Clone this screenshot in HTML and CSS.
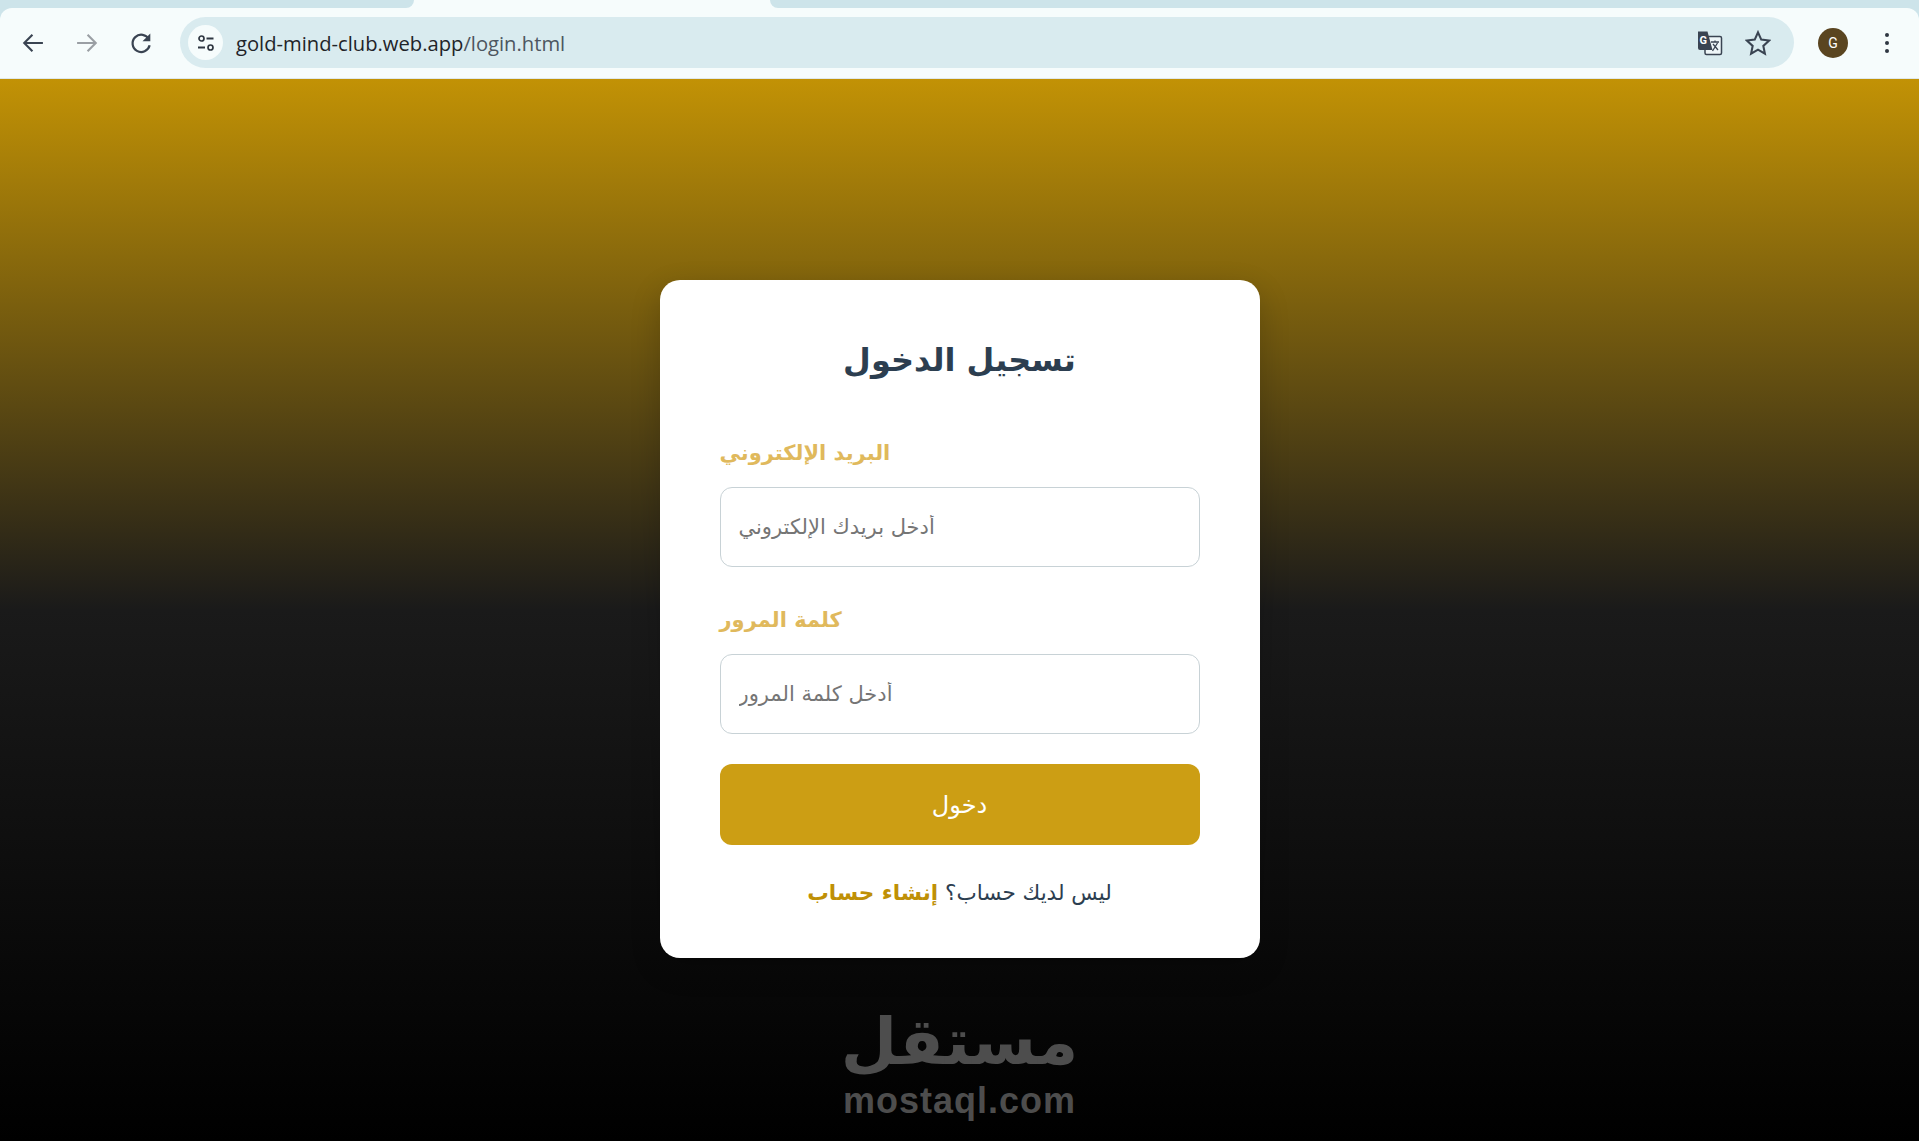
FILE: index.html
```html
<!DOCTYPE html>
<html lang="ar">
<head>
  <meta charset="UTF-8">
  <title>تسجيل الدخول</title>
  <link rel="stylesheet" href="styles.css">
</head>
<body>
  <header class="browser">
    <div class="tabstrip">
      <div class="tab-prev"></div>
      <div class="tab-active"></div>
      <div class="tab-next"></div>
    </div>
    <div class="toolbar">
      <svg class="nav-icon" viewBox="0 0 24 24"><path d="M20.500 12H4.500M11.500 5 4.500 12l7 7" fill="none" stroke="#3a4452" stroke-width="1.800"/></svg>
      <svg class="nav-icon" viewBox="0 0 24 24"><path d="M3.500 12h16M12.500 5l7 7-7 7" fill="none" stroke="#9a9fa4" stroke-width="1.800"/></svg>
      <svg class="nav-icon" viewBox="0 0 24 24"><path d="M18.800 9A7.400 7.400 0 1 0 19.400 14" fill="none" stroke="#3a4452" stroke-width="1.900"/><path d="M20 3.800v6.700h-6.700z" fill="#3a4452"/></svg>
      <div class="omnibox">
        <span class="site-info">
          <svg viewBox="0 0 20 20" width="20" height="20"><circle cx="5.500" cy="5.500" r="2.500" fill="none" stroke="#2f3742" stroke-width="1.700"/><path d="M10.500 5.500h7M2 14.500h7" stroke="#2f3742" stroke-width="1.800"/><circle cx="14.500" cy="14.500" r="2.500" fill="none" stroke="#2f3742" stroke-width="1.700"/></svg>
        </span>
        <span class="url">gold-mind-club.web.app<span class="url-path">/login.html</span></span>
        <svg class="translate" viewBox="0 0 26 26" width="26" height="26">
          <rect x="8" y="6.500" width="16.500" height="18" rx="1.500" fill="#eef6f8" stroke="#3a4452" stroke-width="1.500"/>
          <path d="M1 1.500h9.500l5 18.500H3a2 2 0 0 1-2-2z" fill="#3a4452"/>
          <text x="2.500" y="14" class="translate-g">G</text>
          <path d="M14 12h8M18 10.500v1.500M15.500 21l5-8M16 14l5 6" fill="none" stroke="#3a4452" stroke-width="1.300"/>
        </svg>
        <svg class="star" viewBox="2 2 20 20" width="26" height="26"><path d="M12 3.800l2.500 5.600 6.100.7-4.500 4.100 1.200 6-5.300-3.100-5.300 3.100 1.200-6L3.400 10.100l6.100-.7z" fill="none" stroke="#3a4452" stroke-width="1.600"/></svg>
      </div>
      <span class="avatar">G</span>
      <svg class="menu" viewBox="0 0 6 24" width="6" height="24"><circle cx="3" cy="4" r="2" fill="#2f3742"/><circle cx="3" cy="12" r="2" fill="#2f3742"/><circle cx="3" cy="20" r="2" fill="#2f3742"/></svg>
    </div>
  </header>

  <main class="stage">
    <div class="login-card">
      <h2>تسجيل الدخول</h2>
      <form id="loginForm">
        <div class="form-group">
          <label for="email">البريد الإلكتروني</label>
          <input type="email" id="email" placeholder="أدخل بريدك الإلكتروني">
        </div>
        <div class="form-group">
          <label for="password">كلمة المرور</label>
          <input type="password" id="password" placeholder="أدخل كلمة المرور">
        </div>
        <button type="submit" class="submit-btn">دخول</button>
      </form>
      <p class="signup">ليس لديك حساب؟ <a href="#">إنشاء حساب</a></p>
    </div>
    <div class="watermark">
      <span class="watermark-ar">مستقل</span>
      <span class="watermark-en">mostaql.com</span>
    </div>
  </main>
</body>
</html>
```

FILE: styles.css
```css
* {
  box-sizing: border-box;
}

body {
  margin: 0;
  height: 100vh;
  display: flex;
  flex-direction: column;
  overflow: hidden;
  font-family: "DejaVu Sans", "Noto Sans", sans-serif;
}

/* browser chrome */
.browser {
  flex: none;
  background-color: #cde4ea;
}

.tabstrip {
  height: 8px;
  display: flex;
  background-color: #f6fcfc;
}

.tab-prev {
  width: 414px;
  background-color: #cde4ea;
  border-bottom-right-radius: 8px;
}

.tab-active {
  width: 356px;
}

.tab-next {
  flex: 1;
  background-color: #cde4ea;
  border-bottom-left-radius: 8px;
}

.toolbar {
  height: 71px;
  display: flex;
  align-items: center;
  padding: 0 0 1px 19px;
  background-color: #f6fcfc;
  border-bottom: 1px solid #dfe8ea;
  border-radius: 12px 12px 0 0;
}

.nav-icon {
  width: 28px;
  height: 28px;
  margin-right: 26px;
  flex: none;
}

.omnibox {
  width: 1614px;
  height: 51px;
  margin-left: -1px;
  background-color: #d9ebef;
  border-radius: 26px;
  display: flex;
  align-items: center;
  padding: 0 23px 0 8px;
}

.site-info {
  width: 35px;
  height: 35px;
  border-radius: 50%;
  background-color: #f6fcfc;
  display: flex;
  align-items: center;
  justify-content: center;
}

.url {
  margin-left: 13px;
  flex: 1;
  font-family: "Open Sans", sans-serif;
  font-size: 20.200px;
  color: #1f2429;
}

.url-path {
  color: #4d5660;
}

.translate {
  margin-right: 22px;
}

.translate-g {
  font-family: "Roboto", sans-serif;
  font-size: 11px;
  font-weight: 700;
  fill: #ffffff;
}

.avatar {
  width: 30px;
  height: 30px;
  margin-left: 24px;
  border-radius: 50%;
  background-color: #5a4520;
  color: #fff;
  font-family: "Roboto", sans-serif;
  font-size: 14px;
  display: flex;
  align-items: center;
  justify-content: center;
}

.menu {
  margin-left: 36px;
}

/* page */
.stage {
  flex: 1;
  position: relative;
  display: flex;
  justify-content: center;
  padding-top: 201px;
  background: linear-gradient(to bottom, #c29205 0%, #1a1a1a 50%, #000 100%);
}

.login-card {
  width: 600px;
  height: 678px;
  padding: 60px;
  background-color: #fff;
  border-radius: 20px;
  box-shadow: 0 10px 30px rgba(0, 0, 0, 0.2);
}

h2 {
  margin: 0 0 49px;
  height: 41px;
  line-height: 41px;
  text-align: center;
  font-size: 32px;
  font-weight: 700;
  color: #2c3e50;
}

.form-group {
  padding-top: 5px;
  margin-bottom: 30px;
}

label {
  display: block;
  height: 36px;
  line-height: 36px;
  margin-bottom: 16px;
  font-size: 21px;
  font-weight: 700;
  color: #e0b95c;
}

input {
  display: block;
  width: 100%;
  height: 80px;
  padding: 0 18px;
  border: 1px solid #c8d2d6;
  border-radius: 12px;
  font-family: inherit;
  font-size: 21px;
  direction: rtl;
  text-align: left;
}

input::placeholder {
  color: #757575;
}

.submit-btn {
  display: block;
  width: 100%;
  height: 81px;
  border: none;
  border-radius: 12px;
  background-color: #cc9e14;
  color: #fff;
  font-family: inherit;
  font-size: 24px;
}

.signup {
  margin: 35px 0 0;
  text-align: center;
  font-size: 21.500px;
  color: #2c3e50;
}

.signup a {
  color: #bf9006;
  font-weight: 700;
  text-decoration: none;
}

/* watermark sits over the page background */
.watermark {
  position: absolute;
  left: 50%;
  bottom: 20px;
  transform: translateX(-50%);
  display: flex;
  flex-direction: column;
  align-items: center;
  color: #4d4d4d;
}

.watermark-ar {
  font-size: 65px;
  font-weight: 700;
  line-height: 76px;
}

.watermark-en {
  font-family: "Liberation Sans", sans-serif;
  font-size: 36px;
  font-weight: 700;
  line-height: 41px;
  letter-spacing: 1px;
}
```
